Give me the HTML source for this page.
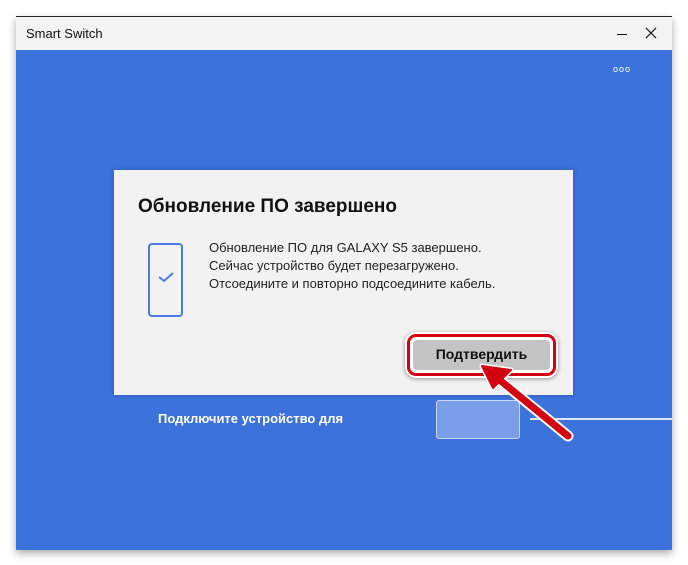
<!DOCTYPE html>
<html><head><meta charset="utf-8"><style>
*{margin:0;padding:0;box-sizing:border-box}
body{width:688px;height:565px;background:#fff;position:relative;overflow:hidden;font-family:"Liberation Sans","DejaVu Sans",sans-serif}
.win{position:absolute;left:16px;top:16px;width:656px;height:533px;box-shadow:0 4px 8px rgba(0,0,0,.35);border-top:1px solid #222}
.title{height:33px;background:#f3f3f3;position:relative}
.title span{position:absolute;left:10px;top:9px;font-size:13px;color:#111}
.blue{position:absolute;left:0;top:33px;width:656px;height:500px;background:#3c72dc}
.dlg{position:absolute;left:114px;top:170px;width:459px;height:225px;background:#f2f2f2;box-shadow:0 0 4px rgba(0,0,0,.25)}
.dlg h1{position:absolute;left:24px;top:26px;font-size:19px;font-weight:bold;color:#111}
.phone{position:absolute;left:34px;top:73px;width:35px;height:74px;border:2px solid #4a7be0;border-radius:4px}
.txt{position:absolute;left:95px;top:69px;font-size:13px;line-height:18px;color:#222}
.btn{position:absolute;left:407px;top:334px;width:149px;height:42px;border:3px solid #d40010;border-radius:9px;box-shadow:0 0 0 2px #fff,0 1px 4px 2px rgba(0,0,0,.4);background:#fff;padding:3px}
.btn div{width:100%;height:100%;background:#c4c4c4;border-radius:4px;font-weight:bold;font-size:14px;color:#111;text-align:center;line-height:28px}
</style></head><body>
<div class="win">
<div class="title"><span>Smart Switch</span>
<div style="position:absolute;left:601px;top:17px;width:10px;height:1px;background:#111"></div>
<svg style="position:absolute;left:629px;top:10px" width="12" height="12"><path d="M1 1L11 11M11 1L1 11" stroke="#111" stroke-width="1.2"/></svg>
</div>
<div class="blue">
<div style="position:absolute;left:597px;top:14px;color:#fff;font-size:9px;letter-spacing:1px">ооо</div>
</div>
</div>
<div style="position:absolute;left:158px;top:411px;color:#fff;font-size:13px;font-weight:bold">Подключите устройство для</div>
<div style="position:absolute;left:436px;top:400px;width:84px;height:39px;border:1.5px solid #c8d6f6;border-radius:3px;background:#7b9ee8"></div>
<div style="position:absolute;left:530px;top:418px;width:142px;height:2px;background:#dde6fa"></div>
<div class="dlg">
<h1>Обновление ПО завершено</h1>
<div class="phone"><svg style="position:absolute;left:8px;top:26px" width="16" height="12"><path d="M1 6L6 10L15 2" fill="none" stroke="#4a7be0" stroke-width="2"/></svg></div>
<div class="txt">Обновление ПО для GALAXY S5 завершено.<br>Сейчас устройство будет перезагружено.<br>Отсоедините и повторно подсоедините кабель.</div>
</div>
<div class="btn"><div>Подтвердить</div></div>
<svg style="position:absolute;left:0;top:0" width="688" height="565">
<g stroke-linecap="round" stroke-linejoin="round">
<path d="M568 436L496 377" stroke="#fff" stroke-width="11"/>
<path d="M482 366L511 370L493 388Z" fill="#fff" stroke="#fff" stroke-width="5"/>
<path d="M568 436L496 377" stroke="#d40010" stroke-width="7"/>
<path d="M482 366L511 370L493 388Z" fill="#d40010" stroke="#d40010" stroke-width="2"/>
</g></svg>
</body></html>
